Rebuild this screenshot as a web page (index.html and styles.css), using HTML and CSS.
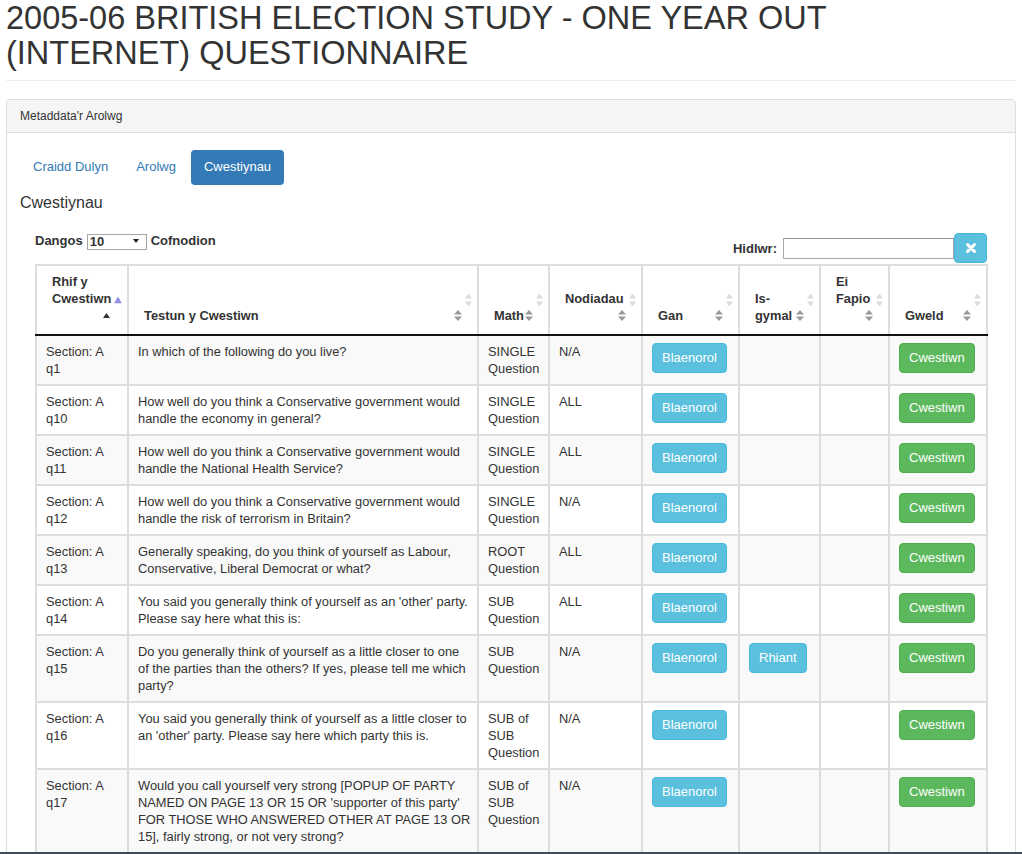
FILE: index.html
```html
<!DOCTYPE html>
<html lang="cy">
<head>
<meta charset="utf-8">
<title>2005-06 British Election Study - One Year Out (Internet) Questionnaire</title>
<link rel="stylesheet" href="styles.css">
</head>
<body>
<div class="page">
  <div class="page-header">
    <h1>2005-06 BRITISH ELECTION STUDY - ONE YEAR OUT (INTERNET) QUESTIONNAIRE</h1>
  </div>

  <div class="panel">
    <div class="panel-heading">Metaddata'r Arolwg</div>
    <div class="panel-body">
      <ul class="nav">
        <li><a href="#">Craidd Dulyn</a></li>
        <li><a href="#">Arolwg</a></li>
        <li class="active"><a href="#">Cwestiynau</a></li>
      </ul>
      <h3 class="section-title">Cwestiynau</h3>

      <div class="inner">
        <div class="controls">
          <div class="length">
            <span>Dangos</span>
            <span class="select-wrap"><select class="select"><option>10</option><option>25</option><option>50</option><option>100</option></select></span>
            <span>Cofnodion</span>
          </div>
          <div class="filter">
            <label for="q">Hidlwr:</label>
            <input id="q" class="filter-input" type="search">
            <button class="clear-btn" type="button" aria-label="Clirio">
              <svg width="10" height="10" viewBox="0 0 10 10"><path d="M1.6 1.6 L8.4 8.4 M8.4 1.6 L1.6 8.4" stroke="#fff" stroke-width="3" stroke-linecap="round"/></svg>
            </button>
          </div>
        </div>

        <table class="qtable">
          <colgroup>
            <col class="w1"><col class="w2"><col class="w3"><col class="w4"><col class="w5"><col class="w6"><col class="w7"><col class="w8">
          </colgroup>
          <thead>
            <tr>
              <th>
                <div class="hl">Rhif y</div>
                <div class="hl">Cwestiwn</div>
                <div class="hl ir"><svg class="tri-up" width="7" height="5" viewBox="0 0 7 5"><polygon points="0,5 3.5,0 7,5" fill="#333"/></svg></div>
                <svg class="sort-l" width="8" height="7" viewBox="0 0 8 7"><polygon points="0,7 4,0 8,7" fill="#8f8fe6"/></svg>
              </th>
              <th>
                <div class="hl fl"><span>Testun y Cwestiwn</span><svg class="sort-d" width="8" height="11" viewBox="0 0 8 11"><polygon points="0,4.5 4,0 8,4.5" fill="#999"/><polygon points="0,6.5 4,11 8,6.5" fill="#999"/></svg></div>
                <svg class="sort-l" width="7" height="13" viewBox="0 0 7 13"><polygon points="0,5 3.5,0 7,5" fill="#dcdcdc"/><polygon points="0,8 3.5,13 7,8" fill="#dcdcdc"/></svg>
              </th>
              <th>
                <div class="hl fl"><span>Math</span><svg class="sort-d" width="8" height="11" viewBox="0 0 8 11"><polygon points="0,4.5 4,0 8,4.5" fill="#999"/><polygon points="0,6.5 4,11 8,6.5" fill="#999"/></svg></div>
                <svg class="sort-l" width="7" height="13" viewBox="0 0 7 13"><polygon points="0,5 3.5,0 7,5" fill="#dcdcdc"/><polygon points="0,8 3.5,13 7,8" fill="#dcdcdc"/></svg>
              </th>
              <th>
                <div class="hl">Nodiadau</div>
                <div class="hl ir"><svg class="sort-d" width="8" height="11" viewBox="0 0 8 11"><polygon points="0,4.5 4,0 8,4.5" fill="#999"/><polygon points="0,6.5 4,11 8,6.5" fill="#999"/></svg></div>
                <svg class="sort-l" width="7" height="13" viewBox="0 0 7 13"><polygon points="0,5 3.5,0 7,5" fill="#dcdcdc"/><polygon points="0,8 3.5,13 7,8" fill="#dcdcdc"/></svg>
              </th>
              <th>
                <div class="hl fl"><span>Gan</span><svg class="sort-d" width="8" height="11" viewBox="0 0 8 11"><polygon points="0,4.5 4,0 8,4.5" fill="#999"/><polygon points="0,6.5 4,11 8,6.5" fill="#999"/></svg></div>
                <svg class="sort-l" width="7" height="13" viewBox="0 0 7 13"><polygon points="0,5 3.5,0 7,5" fill="#dcdcdc"/><polygon points="0,8 3.5,13 7,8" fill="#dcdcdc"/></svg>
              </th>
              <th>
                <div class="hl">Is-</div>
                <div class="hl fl"><span>gymal</span><svg class="sort-d" width="8" height="11" viewBox="0 0 8 11"><polygon points="0,4.5 4,0 8,4.5" fill="#999"/><polygon points="0,6.5 4,11 8,6.5" fill="#999"/></svg></div>
                <svg class="sort-l" width="7" height="13" viewBox="0 0 7 13"><polygon points="0,5 3.5,0 7,5" fill="#dcdcdc"/><polygon points="0,8 3.5,13 7,8" fill="#dcdcdc"/></svg>
              </th>
              <th>
                <div class="hl">Ei</div>
                <div class="hl">Fapio</div>
                <div class="hl ir"><svg class="sort-d" width="8" height="11" viewBox="0 0 8 11"><polygon points="0,4.5 4,0 8,4.5" fill="#999"/><polygon points="0,6.5 4,11 8,6.5" fill="#999"/></svg></div>
                <svg class="sort-l" width="7" height="13" viewBox="0 0 7 13"><polygon points="0,5 3.5,0 7,5" fill="#dcdcdc"/><polygon points="0,8 3.5,13 7,8" fill="#dcdcdc"/></svg>
              </th>
              <th>
                <div class="hl fl"><span>Gweld</span><svg class="sort-d" width="8" height="11" viewBox="0 0 8 11"><polygon points="0,4.5 4,0 8,4.5" fill="#999"/><polygon points="0,6.5 4,11 8,6.5" fill="#999"/></svg></div>
                <svg class="sort-l" width="7" height="13" viewBox="0 0 7 13"><polygon points="0,5 3.5,0 7,5" fill="#dcdcdc"/><polygon points="0,8 3.5,13 7,8" fill="#dcdcdc"/></svg>
              </th>
            </tr>
          </thead>
          <tbody>
            <tr>
              <td>Section: A q1</td>
              <td>In which of the following do you live?</td>
              <td>SINGLE Question</td>
              <td>N/A</td>
              <td><a class="btn btn-info" href="#">Blaenorol</a></td>
              <td></td>
              <td></td>
              <td><a class="btn btn-success" href="#">Cwestiwn</a></td>
            </tr>
            <tr>
              <td>Section: A q10</td>
              <td>How well do you think a Conservative government would handle the economy in general?</td>
              <td>SINGLE Question</td>
              <td>ALL</td>
              <td><a class="btn btn-info" href="#">Blaenorol</a></td>
              <td></td>
              <td></td>
              <td><a class="btn btn-success" href="#">Cwestiwn</a></td>
            </tr>
            <tr>
              <td>Section: A q11</td>
              <td>How well do you think a Conservative government would handle the National Health Service?</td>
              <td>SINGLE Question</td>
              <td>ALL</td>
              <td><a class="btn btn-info" href="#">Blaenorol</a></td>
              <td></td>
              <td></td>
              <td><a class="btn btn-success" href="#">Cwestiwn</a></td>
            </tr>
            <tr>
              <td>Section: A q12</td>
              <td>How well do you think a Conservative government would handle the risk of terrorism in Britain?</td>
              <td>SINGLE Question</td>
              <td>N/A</td>
              <td><a class="btn btn-info" href="#">Blaenorol</a></td>
              <td></td>
              <td></td>
              <td><a class="btn btn-success" href="#">Cwestiwn</a></td>
            </tr>
            <tr>
              <td>Section: A q13</td>
              <td>Generally speaking, do you think of yourself as Labour, Conservative, Liberal Democrat or what?</td>
              <td>ROOT Question</td>
              <td>ALL</td>
              <td><a class="btn btn-info" href="#">Blaenorol</a></td>
              <td></td>
              <td></td>
              <td><a class="btn btn-success" href="#">Cwestiwn</a></td>
            </tr>
            <tr>
              <td>Section: A q14</td>
              <td>You said you generally think of yourself as an 'other' party. Please say here what this is:</td>
              <td>SUB Question</td>
              <td>ALL</td>
              <td><a class="btn btn-info" href="#">Blaenorol</a></td>
              <td></td>
              <td></td>
              <td><a class="btn btn-success" href="#">Cwestiwn</a></td>
            </tr>
            <tr>
              <td>Section: A q15</td>
              <td>Do you generally think of yourself as a little closer to one of the parties than the others? If yes, please tell me which party?</td>
              <td>SUB Question</td>
              <td>N/A</td>
              <td><a class="btn btn-info" href="#">Blaenorol</a></td>
              <td><a class="btn btn-info" href="#">Rhiant</a></td>
              <td></td>
              <td><a class="btn btn-success" href="#">Cwestiwn</a></td>
            </tr>
            <tr>
              <td>Section: A q16</td>
              <td>You said you generally think of yourself as a little closer to an 'other' party. Please say here which party this is.</td>
              <td>SUB of SUB Question</td>
              <td>N/A</td>
              <td><a class="btn btn-info" href="#">Blaenorol</a></td>
              <td></td>
              <td></td>
              <td><a class="btn btn-success" href="#">Cwestiwn</a></td>
            </tr>
            <tr>
              <td>Section: A q17</td>
              <td>Would you call yourself very strong [POPUP OF PARTY NAMED ON PAGE 13 OR 15 OR 'supporter of this party' FOR THOSE WHO ANSWERED OTHER AT PAGE 13 OR 15], fairly strong, or not very strong?</td>
              <td>SUB of SUB Question</td>
              <td>N/A</td>
              <td><a class="btn btn-info" href="#">Blaenorol</a></td>
              <td></td>
              <td></td>
              <td><a class="btn btn-success" href="#">Cwestiwn</a></td>
            </tr>
          </tbody>
        </table>
      </div>
    </div>
  </div>
</div>
<div class="bottom-bar"></div>
</body>
</html>
```

FILE: styles.css
```css
* { box-sizing: border-box; }

html, body { margin: 0; padding: 0; background: #fff; }

body {
  font-family: "Liberation Sans", Arial, Helvetica, sans-serif;
  font-size: 13px;
  line-height: 17px;
  color: #333;
}

.page { padding: 0 6px; }

.page-header {
  padding-top: 1px;
  padding-bottom: 9px;
  border-bottom: 1px solid #eee;
  margin: 0 0 18px;
}

.page-header h1 {
  margin: 0;
  font-size: 32.5px;
  line-height: 35px;
  font-weight: normal;
  color: #333;
}

.panel {
  border: 1px solid #ddd;
  border-radius: 4px;
  background: #fff;
}

.panel-heading {
  background: #f5f5f5;
  border-bottom: 1px solid #ddd;
  border-radius: 3px 3px 0 0;
  padding: 8px 13px;
  font-size: 12px;
  line-height: 16px;
}

.panel-body { padding: 17px 13px 16px; }

.nav {
  display: flex;
  gap: 2px;
  list-style: none;
  margin: 0;
  padding: 0;
}

.nav a {
  display: block;
  padding: 8px 13px;
  font-size: 13px;
  line-height: 18.5px;
  color: #337ab7;
  text-decoration: none;
  border-radius: 4px;
}

.nav .active a {
  background: #337ab7;
  color: #fff;
}

.section-title {
  margin: 9px 0 0;
  font-size: 16px;
  line-height: 17.6px;
  font-weight: normal;
}

.inner {
  padding: 0 15px;
  margin-top: 21px;
}

.controls {
  display: flex;
  justify-content: space-between;
  align-items: flex-start;
}

.length {
  display: flex;
  align-items: center;
  gap: 4px;
  font-weight: bold;
  line-height: 17px;
}

.select-wrap {
  position: relative;
  display: inline-block;
  width: 60px;
  height: 16px;
}

.select-wrap::after {
  content: "";
  position: absolute;
  right: 8px;
  top: 6px;
  border-left: 3px solid transparent;
  border-right: 3px solid transparent;
  border-top: 4px solid #222;
  pointer-events: none;
}

.select {
  appearance: none;
  -webkit-appearance: none;
  width: 60px;
  height: 16px;
  margin: 0;
  padding: 0 0 0 2px;
  border: 1px solid #a6a6a6;
  border-radius: 0;
  background: #fff;
  font-family: inherit;
  font-size: 13px;
  font-weight: bold;
  line-height: 14px;
  color: #333;
}

.filter {
  display: flex;
  align-items: center;
  margin-top: 1px;
}

.filter label {
  font-weight: bold;
  margin-right: 6px;
}

.filter-input {
  width: 171px;
  height: 21px;
  margin: 0;
  padding: 1px 4px;
  border: 1px solid #a9a9a9;
  border-top-color: #8f8f8f;
  border-radius: 0;
  font-family: inherit;
  font-size: 13px;
  background: #fff;
}

.clear-btn {
  width: 33px;
  height: 30px;
  margin: 0;
  padding: 0;
  border: 1px solid #46b8da;
  border-radius: 4px;
  background: #5bc0de;
  display: flex;
  align-items: center;
  justify-content: center;
}

.qtable {
  margin-top: 1px;
  width: 953px;
  table-layout: fixed;
  border-collapse: collapse;
  font-size: 12.85px;
}

.w1 { width: 92px; }
.w2 { width: 350px; }
.w3 { width: 71px; }
.w4 { width: 93px; }
.w5 { width: 97px; }
.w6 { width: 81px; }
.w7 { width: 69px; }
.w8 { width: 98px; }

.qtable th,
.qtable td {
  border: 2px solid #ddd;
}

.qtable th {
  position: relative;
  padding: 7px 15px 10px 15px;
  vertical-align: bottom;
  text-align: left;
  font-weight: bold;
  white-space: nowrap;
  border-bottom: 2px solid #111;
}

.hl {
  height: 17px;
  line-height: 17px;
}

.fl {
  display: flex;
  justify-content: space-between;
  align-items: center;
}

.ir {
  display: flex;
  justify-content: flex-end;
  align-items: center;
}

.sort-d { display: block; flex: none; }

.tri-up { display: block; margin-right: 2px; }

.sort-l {
  position: absolute;
  right: 5px;
  top: 50%;
  transform: translateY(-50%);
}

.qtable td {
  padding: 7px 5px 7px 9px;
  vertical-align: top;
  line-height: 17px;
}

.qtable td:first-child { padding-right: 12px; }

.qtable tbody tr:nth-child(odd) td { background: #f9f9f9; }

.btn {
  display: inline-block;
  padding: 5px 9px;
  font-size: 13px;
  line-height: 18px;
  color: #fff;
  text-decoration: none;
  border: 1px solid transparent;
  border-radius: 4px;
  white-space: nowrap;
}

.btn-info { background: #5bc0de; border-color: #46b8da; }
.btn-success { background: #5cb85c; border-color: #4cae4c; }

.bottom-bar {
  position: fixed;
  left: 0;
  right: 0;
  bottom: 0;
  height: 2px;
  background: #3e4a56;
}
```
